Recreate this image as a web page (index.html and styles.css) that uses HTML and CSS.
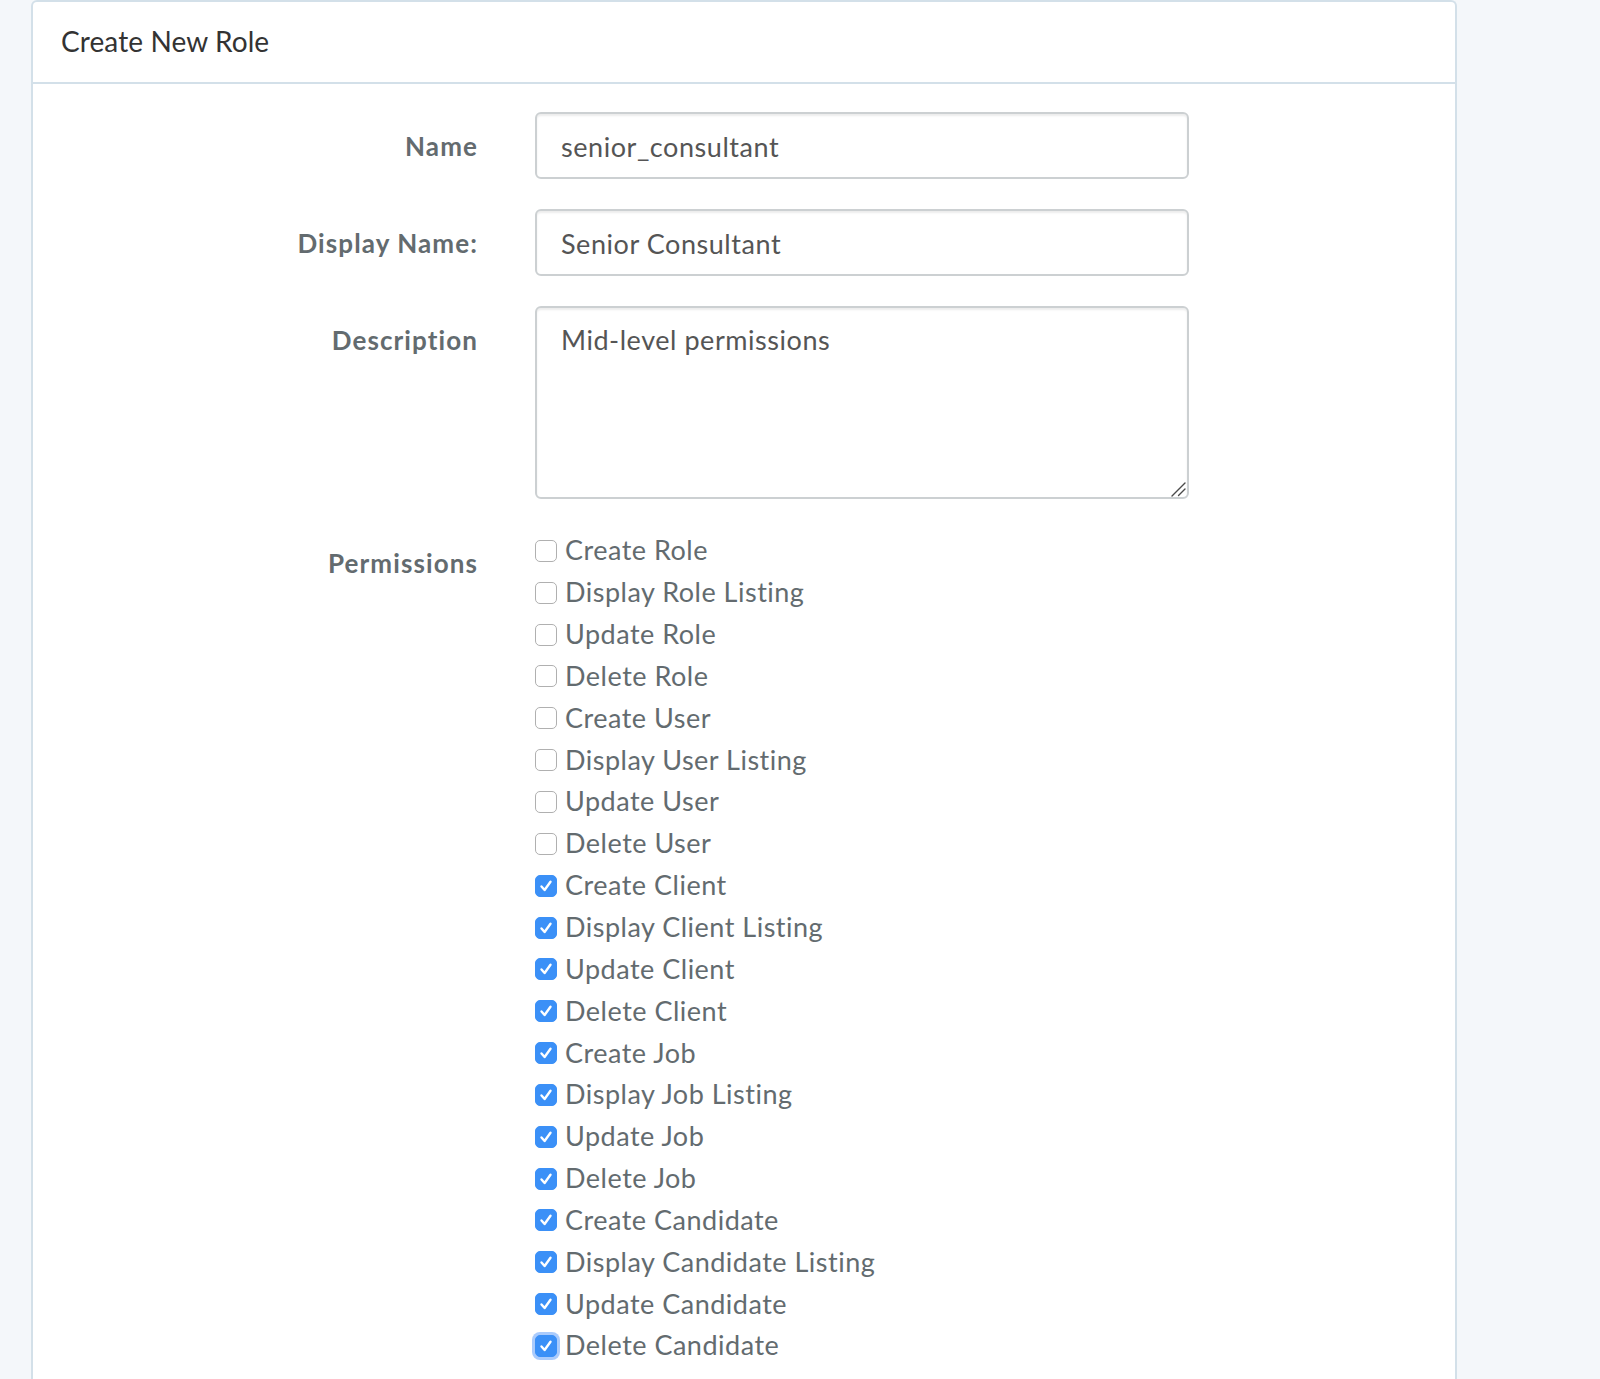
FILE: index.html
```html
<!DOCTYPE html>
<html lang="en">
<head>
<meta charset="utf-8">
<title>Create New Role</title>
<link rel="stylesheet" href="styles.css">
</head>
<body>
<div class="panel">
  <div class="panel-heading">Create New Role</div>
  <div class="panel-body">
    <form class="role-form">
      <div class="form-row">
        <label class="form-label">Name</label>
        <input class="form-control" type="text" value="senior_consultant">
      </div>
      <div class="form-row">
        <label class="form-label">Display Name:</label>
        <input class="form-control" type="text" value="Senior Consultant">
      </div>
      <div class="form-row">
        <label class="form-label">Description</label>
        <div class="textarea-wrap">
          <textarea class="form-control form-textarea">Mid-level permissions</textarea>
          <svg class="grip" viewBox="0 0 18 18"><path d="M2 16 L15 3 M8.5 15.5 L15 9" /></svg>
        </div>
      </div>
      <div class="form-row">
        <label class="form-label">Permissions</label>
        <div class="checks">
          <div class="check"><span class="box"></span><span>Create Role</span></div>
          <div class="check"><span class="box"></span><span>Display Role Listing</span></div>
          <div class="check"><span class="box"></span><span>Update Role</span></div>
          <div class="check"><span class="box"></span><span>Delete Role</span></div>
          <div class="check"><span class="box"></span><span>Create User</span></div>
          <div class="check"><span class="box"></span><span>Display User Listing</span></div>
          <div class="check"><span class="box"></span><span>Update User</span></div>
          <div class="check"><span class="box"></span><span>Delete User</span></div>
          <div class="check"><span class="box checked"><svg viewBox="0 0 22 22"><path d="M6.5 11.5 L9.6 15 L15.5 6.8" /></svg></span><span>Create Client</span></div>
          <div class="check"><span class="box checked"><svg viewBox="0 0 22 22"><path d="M6.5 11.5 L9.6 15 L15.5 6.8" /></svg></span><span>Display Client Listing</span></div>
          <div class="check"><span class="box checked"><svg viewBox="0 0 22 22"><path d="M6.5 11.5 L9.6 15 L15.5 6.8" /></svg></span><span>Update Client</span></div>
          <div class="check"><span class="box checked"><svg viewBox="0 0 22 22"><path d="M6.5 11.5 L9.6 15 L15.5 6.8" /></svg></span><span>Delete Client</span></div>
          <div class="check"><span class="box checked"><svg viewBox="0 0 22 22"><path d="M6.5 11.5 L9.6 15 L15.5 6.8" /></svg></span><span>Create Job</span></div>
          <div class="check"><span class="box checked"><svg viewBox="0 0 22 22"><path d="M6.5 11.5 L9.6 15 L15.5 6.8" /></svg></span><span>Display Job Listing</span></div>
          <div class="check"><span class="box checked"><svg viewBox="0 0 22 22"><path d="M6.5 11.5 L9.6 15 L15.5 6.8" /></svg></span><span>Update Job</span></div>
          <div class="check"><span class="box checked"><svg viewBox="0 0 22 22"><path d="M6.5 11.5 L9.6 15 L15.5 6.8" /></svg></span><span>Delete Job</span></div>
          <div class="check"><span class="box checked"><svg viewBox="0 0 22 22"><path d="M6.5 11.5 L9.6 15 L15.5 6.8" /></svg></span><span>Create Candidate</span></div>
          <div class="check"><span class="box checked"><svg viewBox="0 0 22 22"><path d="M6.5 11.5 L9.6 15 L15.5 6.8" /></svg></span><span>Display Candidate Listing</span></div>
          <div class="check"><span class="box checked"><svg viewBox="0 0 22 22"><path d="M6.5 11.5 L9.6 15 L15.5 6.8" /></svg></span><span>Update Candidate</span></div>
          <div class="check"><span class="box checked focused"><svg viewBox="0 0 22 22"><path d="M6.5 11.5 L9.6 15 L15.5 6.8" /></svg></span><span>Delete Candidate</span></div>
        </div>
      </div>
    </form>
  </div>
</div>
</body>
</html>
```

FILE: styles.css
```css
html, body {
  margin: 0;
  padding: 0;
}

body {
  background: #f4f7fa;
  font-family: "Lato", "Open Sans", sans-serif;
  color: #636b6f;
  overflow: hidden;
  height: 1379px;
}

.panel {
  margin-left: 31px;
  width: 1426px;
  box-sizing: border-box;
  background: #fff;
  border: 2px solid #d3e0e9;
  border-bottom: none;
  border-radius: 6px 6px 0 0;
  min-height: 1379px;
}

.panel-heading {
  box-sizing: border-box;
  height: 82px;
  padding: 1px 0 2px 28px;
  line-height: 77px;
  font-size: 28px;
  letter-spacing: 0.1px;
  color: #333;
  border-bottom: 2px solid #d3e0e9;
}

.panel-body {
  padding-top: 28px;
}

.role-form {
  display: flex;
  flex-direction: column;
  gap: 30px;
}

.form-row {
  display: grid;
  grid-template-columns: 445px 654px;
  column-gap: 57px;
  align-items: start;
}

.form-label {
  text-align: right;
  font-weight: 700;
  font-size: 26px;
  letter-spacing: 1.1px;
  line-height: 68px;
  margin-bottom: -1px;
  color: #636b6f;
}

.form-control {
  box-sizing: border-box;
  width: 654px;
  height: 67px;
  margin: 0;
  padding: 2px 24px 0;
  font-family: inherit;
  font-size: 27px;
  letter-spacing: 0.55px;
  color: #555;
  background: #fff;
  border: 2px solid #ccd0d2;
  border-radius: 6px;
  box-shadow: inset 0 2px 2px rgba(0, 0, 0, 0.075);
  outline: none;
}

.textarea-wrap {
  position: relative;
  width: 654px;
  height: 193px;
}

.form-textarea {
  display: block;
  height: 193px;
  padding-top: 10px;
  line-height: 43px;
  resize: none;
}

.grip {
  position: absolute;
  right: 1px;
  bottom: 1px;
  width: 18px;
  height: 18px;
}

.grip path {
  fill: none;
  stroke: #4a4a4a;
  stroke-width: 1.4;
  stroke-linecap: round;
}

.checks {
  display: flex;
  flex-direction: column;
  margin-top: 1px;
}

.check {
  display: flex;
  align-items: center;
  height: 41.85px;
  gap: 8px;
  font-size: 27px;
  letter-spacing: 0.5px;
  color: #636b6f;
}

.check span:last-child {
  margin-top: -2px;
}

.box {
  box-sizing: border-box;
  width: 22px;
  height: 22px;
  flex: none;
  border: 1.5px solid #b0b0b0;
  border-radius: 5px;
  background: #fff;
  display: flex;
  align-items: center;
  justify-content: center;
}

.box.checked {
  background: #3b90f7;
  border-color: #3b90f7;
}

.box.focused {
  box-shadow: 0 0 0 3px rgba(100, 160, 250, 0.55);
}

.box svg {
  width: 22px;
  height: 22px;
  flex: none;
}

.box svg path {
  fill: none;
  stroke: #fff;
  stroke-width: 2.4;
  stroke-linecap: round;
  stroke-linejoin: round;
}
```
